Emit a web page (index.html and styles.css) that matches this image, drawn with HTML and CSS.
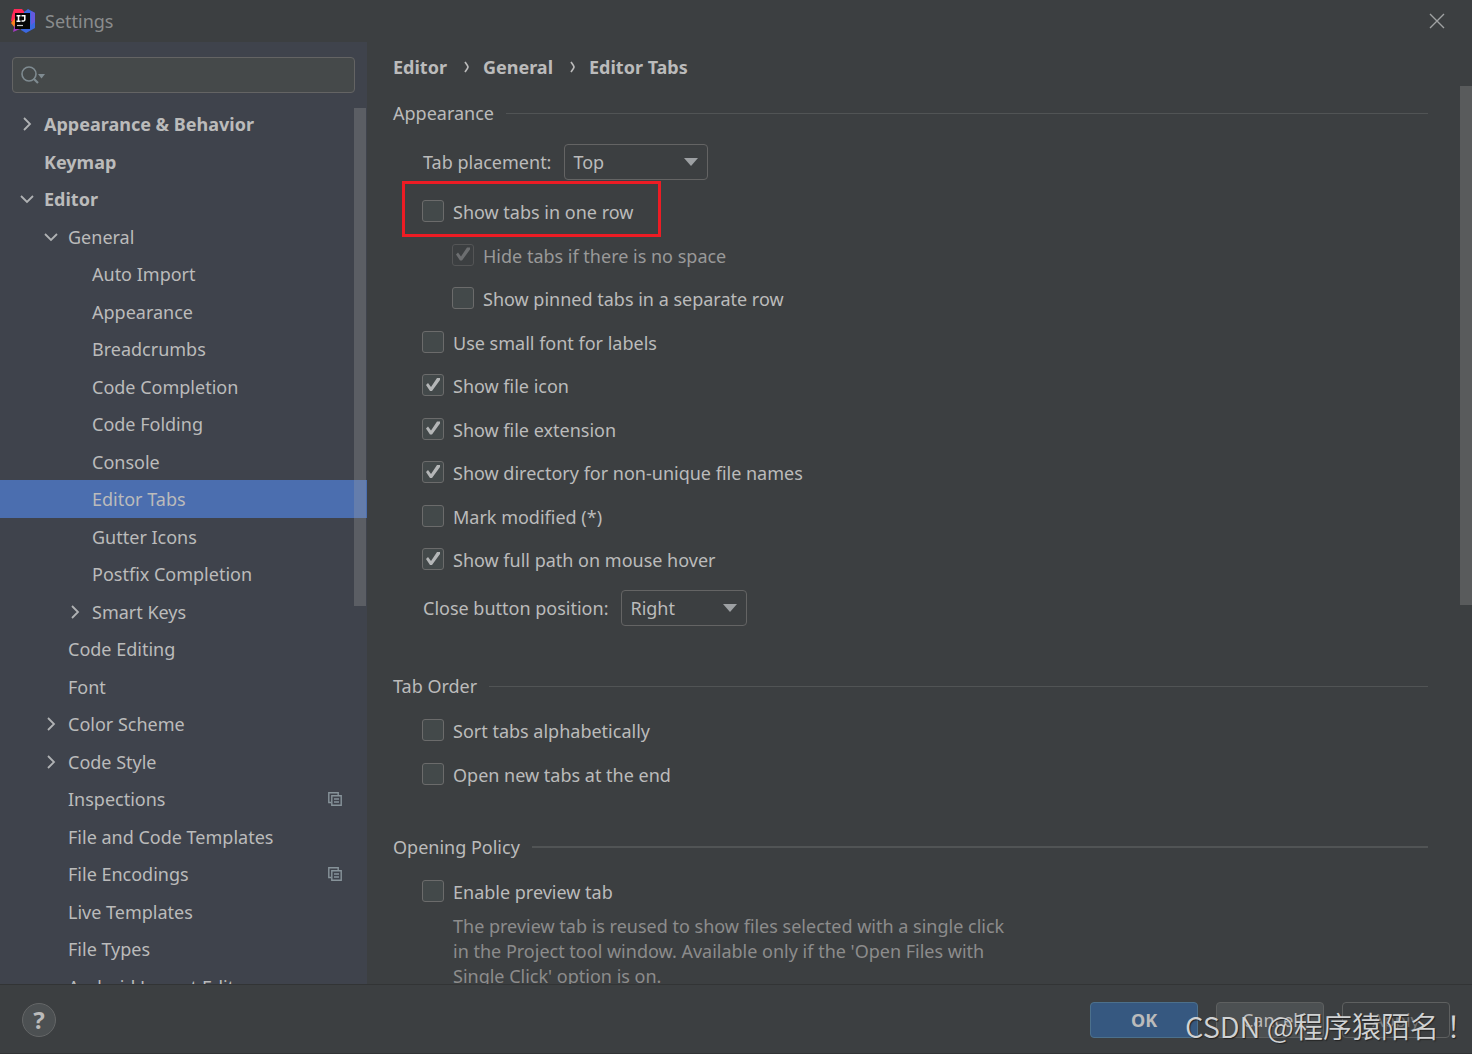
FILE: index.html
```html
<!DOCTYPE html>
<html lang="en">
<head>
<meta charset="utf-8">
<title>Settings</title>
<link rel="stylesheet" href="styles.css">
</head>
<body>
<svg class="defs" aria-hidden="true">
  <symbol id="chev-right" viewBox="0 0 14 14"><path d="M4 1l6 6-6 6" fill="none" stroke="currentColor" stroke-width="1.8"/></symbol>
  <symbol id="chev-down" viewBox="0 0 14 14"><path d="M1 4l6 6 6-6" fill="none" stroke="currentColor" stroke-width="1.8"/></symbol>
  <symbol id="arrow" viewBox="0 0 14 8"><path d="M0 0h14L7 8z" fill="currentColor"/></symbol>
  <symbol id="crumb" viewBox="0 0 6 12"><path d="M1 1q3 4 3 5t-3 5" fill="none" stroke="currentColor" stroke-width="1.7"/></symbol>
  <symbol id="copy" viewBox="0 0 14 14"><path d="M3 10.5H.8V.8h9.4V3" fill="none" stroke="currentColor" stroke-width="1.4"/><path d="M3.8 3.8h9.4v9.4H3.8zM6 7h5M6 10h5" fill="none" stroke="currentColor" stroke-width="1.4"/></symbol>
</svg>

<header class="titlebar">
  <svg class="logo" viewBox="0 0 24 24" aria-hidden="true">
    <path d="M3 0h8l4 5-8 12-7-5 1-6z" fill="#fe2857"/>
    <path d="M0 14l5-6 3 8-4 3z" fill="#fc801d"/>
    <path d="M2 23l2-8h9l2 6-6-1z" fill="#a23bc0"/>
    <path d="M13 3l4-3 7 4v15l-9 5-5-3z" fill="#3b68e0"/>
    <path d="M20 2l4 2v9l-4 3z" fill="#6459dd"/>
    <path d="M4 4h15v16H4z" fill="#060606"/>
    <path d="M5.500 6.700h4M7.500 6.700v5.600M5.500 12.300h4M10.500 6.700h3.300v4q0 1.600-3.300 1.400" fill="none" stroke="#fff" stroke-width="1.500"/>
    <path d="M6 16.500h6" stroke="#ccc" stroke-width="1.200"/>
  </svg>
  <h1 class="title">Settings</h1>
  <button class="close" type="button" aria-label="Close">
    <svg viewBox="0 0 16 16"><path d="M1 1l14 14M15 1L1 15" stroke="currentColor" stroke-width="1.400"/></svg>
  </button>
</header>

<div class="body">
  <nav class="sidebar" aria-label="Settings categories">
    <div class="search">
      <svg viewBox="0 0 26 20" aria-hidden="true"><circle cx="8" cy="9" r="7" fill="none" stroke="currentColor" stroke-width="1.600"/><path d="M12.500 13.500l4.500 4.500" stroke="currentColor" stroke-width="2.200"/><path d="M17 9h7l-3.500 4.500z" fill="currentColor"/></svg>
      <input type="text" aria-label="Search settings">
    </div>
    <div class="tree-pane">
      <ul class="tree">
        <li class="top"><svg class="chev"><use href="#chev-right"/></svg><a href="#">Appearance &amp; Behavior</a></li>
        <li class="top"><a href="#">Keymap</a></li>
        <li class="top"><svg class="chev"><use href="#chev-down"/></svg><a href="#">Editor</a></li>
        <li class="l1"><svg class="chev"><use href="#chev-down"/></svg><a href="#">General</a></li>
        <li class="l2"><a href="#">Auto Import</a></li>
        <li class="l2"><a href="#">Appearance</a></li>
        <li class="l2"><a href="#">Breadcrumbs</a></li>
        <li class="l2"><a href="#">Code Completion</a></li>
        <li class="l2"><a href="#">Code Folding</a></li>
        <li class="l2"><a href="#">Console</a></li>
        <li class="l2 selected"><a href="#" aria-current="page">Editor Tabs</a></li>
        <li class="l2"><a href="#">Gutter Icons</a></li>
        <li class="l2"><a href="#">Postfix Completion</a></li>
        <li class="l2"><svg class="chev"><use href="#chev-right"/></svg><a href="#">Smart Keys</a></li>
        <li class="l1"><a href="#">Code Editing</a></li>
        <li class="l1"><a href="#">Font</a></li>
        <li class="l1"><svg class="chev"><use href="#chev-right"/></svg><a href="#">Color Scheme</a></li>
        <li class="l1"><svg class="chev"><use href="#chev-right"/></svg><a href="#">Code Style</a></li>
        <li class="l1"><a href="#">Inspections</a><svg class="copy"><use href="#copy"/></svg></li>
        <li class="l1"><a href="#">File and Code Templates</a></li>
        <li class="l1"><a href="#">File Encodings</a><svg class="copy"><use href="#copy"/></svg></li>
        <li class="l1"><a href="#">Live Templates</a></li>
        <li class="l1"><a href="#">File Types</a></li>
        <li class="l1"><a href="#">Android Layout Editor</a></li>
      </ul>
      <div class="scrollbar tree-bar"></div>
    </div>
  </nav>

  <main class="content">
    <div class="crumbs">
      <span>Editor</span><svg><use href="#crumb"/></svg><span>General</span><svg><use href="#crumb"/></svg><span>Editor Tabs</span>
    </div>

    <section>
      <h2>Appearance</h2>
      <div class="field">
        <label for="placement">Tab placement:</label>
        <div class="combo wide">
          <select id="placement"><option>Top</option></select>
          <svg><use href="#arrow"/></svg>
        </div>
      </div>
      <div class="checks">
        <div class="check"><input type="checkbox" id="c1"><label for="c1">Show tabs in one row</label><div class="highlight"></div></div>
        <div class="check nested disabled"><input type="checkbox" id="c2" checked disabled><label for="c2">Hide tabs if there is no space</label></div>
        <div class="check nested"><input type="checkbox" id="c3"><label for="c3">Show pinned tabs in a separate row</label></div>
        <div class="check"><input type="checkbox" id="c4"><label for="c4">Use small font for labels</label></div>
        <div class="check"><input type="checkbox" id="c5" checked><label for="c5">Show file icon</label></div>
        <div class="check"><input type="checkbox" id="c6" checked><label for="c6">Show file extension</label></div>
        <div class="check"><input type="checkbox" id="c7" checked><label for="c7">Show directory for non-unique file names</label></div>
        <div class="check"><input type="checkbox" id="c8"><label for="c8">Mark modified (*)</label></div>
        <div class="check"><input type="checkbox" id="c9" checked><label for="c9">Show full path on mouse hover</label></div>
      </div>
      <div class="field">
        <label for="closepos">Close button position:</label>
        <div class="combo">
          <select id="closepos"><option>Right</option></select>
          <svg><use href="#arrow"/></svg>
        </div>
      </div>
    </section>

    <section>
      <h2>Tab Order</h2>
      <div class="checks">
        <div class="check"><input type="checkbox" id="c10"><label for="c10">Sort tabs alphabetically</label></div>
        <div class="check"><input type="checkbox" id="c11"><label for="c11">Open new tabs at the end</label></div>
      </div>
    </section>

    <section>
      <h2 class="strong">Opening Policy</h2>
      <div class="checks">
        <div class="check"><input type="checkbox" id="c12"><label for="c12">Enable preview tab</label></div>
      </div>
      <p class="hint">The preview tab is reused to show files selected with a single click in the Project tool window. Available only if the 'Open Files with Single Click' option is on.</p>
    </section>
    <div class="scrollbar page-bar"></div>
  </main>
</div>

<footer class="footer">
  <button class="help" type="button" aria-label="Help">?</button>
  <button class="btn primary" type="button">OK</button>
  <button class="btn" type="button">Cancel</button>
  <button class="btn apply" type="button" disabled>Apply</button>
  <div class="watermark">CSDN @程序猿陌名<span>！</span></div>
</footer>
</body>
</html>
```
FILE: styles.css
```css
* { box-sizing: border-box; }

body {
  margin: 0;
  height: 100vh;
  display: flex;
  flex-direction: column;
  overflow: hidden;
  background: #3c3f41;
  color: #bbbbbb;
  font: 18px/24px "Noto Sans", "Noto Sans CJK SC", sans-serif;
}

button, input, select { font: inherit; color: inherit; margin: 0; }
a { color: inherit; text-decoration: none; }
.defs { position: absolute; width: 0; height: 0; }

/* Title bar */
.titlebar {
  flex: none;
  height: 42px;
  display: flex;
  align-items: center;
  gap: 10px;
  padding: 0 27px 0 11px;
}
.logo { width: 24px; height: 24px; }
.title { margin: 0; flex: 1; font-size: 18px; font-weight: 400; color: #8a8c8d; }
.close { display: flex; padding: 0; border: 0; background: none; color: #a0a2a3; }
.close svg { width: 16px; height: 16px; }

.body { flex: 1; min-height: 0; display: flex; }

/* Category tree */
.sidebar {
  flex: none;
  width: 367px;
  display: flex;
  flex-direction: column;
  background: #3f434c;
}
.search {
  flex: none;
  height: 36px;
  margin: 15px 12px 12px;
  padding-left: 8px;
  display: flex;
  align-items: center;
  border: 1px solid #646464;
  border-radius: 4px;
  background: #45494a;
  color: #7f8b91;
}
.search svg { width: 26px; height: 20px; }
.search input { flex: 1; min-width: 0; border: 0; outline: 0; background: none; }

.tree-pane { position: relative; flex: 1; min-height: 0; overflow: hidden; }
.tree { list-style: none; margin: 0; padding: 0; }
.tree li {
  height: 38px;
  display: flex;
  align-items: center;
  padding-right: 25px;
}
.tree li:nth-child(even) { height: 37px; }
.tree .top { padding-left: 44px; font-weight: 700; }
.tree .l1 { padding-left: 68px; }
.tree .l2 { padding-left: 92px; }
.tree .selected { background: #4b6eaf; }
.tree a { flex: 1; }
.chev { width: 14px; height: 14px; margin-left: -24px; margin-right: 10px; color: #b0b2b4; }
.copy { width: 14px; height: 14px; color: #87939a; }

.scrollbar { position: absolute; background: rgba(166, 166, 166, 0.28); }
.tree-bar { top: 3px; right: 1px; width: 12px; height: 498px; }
.page-bar { top: 44px; right: 0; width: 12px; height: 519px; }

/* Settings page */
.content {
  position: relative;
  flex: 1;
  min-width: 0;
  overflow: hidden;
  padding: 13px 44px 0 26px;
}
.crumbs { display: flex; align-items: center; font-weight: 700; }
.crumbs svg { width: 6px; height: 12px; margin: 0 13px 0 17px; }

section { margin-bottom: 39px; }
h2 {
  display: flex;
  align-items: center;
  gap: 12px;
  margin: 0;
  font-size: 18px;
  font-weight: 400;
}
h2::after { content: ""; flex: 1; height: 1px; background: #515455; }
h2.strong::after { height: 2px; }
.crumbs + section { margin-top: 22px; padding-bottom: 9px; }

.field { display: flex; align-items: center; gap: 13px; padding-left: 30px; }
h2 + .field { margin: 19px 0 10px; }
.checks + .field { margin-top: 8px; }
.combo { display: grid; align-items: center; width: 126px; }
.combo.wide { width: 144px; }
.combo select {
  grid-area: 1 / 1;
  height: 36px;
  padding: 0 8px;
  appearance: none;
  border: 1px solid #646464;
  border-radius: 4px;
  background: #3c3f41;
}
.combo svg {
  grid-area: 1 / 1;
  justify-self: end;
  width: 14px;
  height: 8px;
  margin-right: 10px;
  color: #9da0a3;
  pointer-events: none;
}

.check {
  position: relative;
  height: 43px;
  display: flex;
  align-items: center;
  gap: 9px;
  padding-left: 29px;
}
.check:nth-child(odd) { height: 44px; }
h2 + .checks { margin-top: 11px; }
.nested { padding-left: 59px; }
.check input {
  width: 22px;
  height: 22px;
  margin-bottom: 2px;
  appearance: none;
  border: 1px solid #6b6b6b;
  border-radius: 3px;
  background: #43494a;
}
.check input:checked::before {
  content: "";
  display: block;
  height: 20px;
  background: #b4b6b7;
  clip-path: polygon(3px 10px, 5px 8px, 8px 12px, 14px 3px, 17px 3px, 17px 5px, 9px 16px, 7px 16px);
}
.disabled { color: #999999; }
.disabled input { border-color: #545556; background: #3c3f41; }
.disabled input:checked::before { background: #6c6e70; }

/* Marker frame drawn over the option it points out */
.highlight {
  position: absolute;
  top: -9px;
  left: 9px;
  width: 259px;
  height: 56px;
  border: 3px solid #ed1c24;
}

.hint {
  margin: 0;
  padding-left: 60px;
  max-width: 630px;
  line-height: 25px;
  color: #8c8c8c;
}

/* Button bar */
.footer {
  position: relative;
  flex: none;
  height: 70px;
  display: flex;
  align-items: center;
  gap: 18px;
  padding: 2px 22px 0;
  border-top: 1px solid #323435;
  border-bottom: 1px solid #323435;
}
.help {
  width: 34px;
  height: 34px;
  padding: 0;
  margin-right: auto;
  border: 1px solid #646667;
  border-radius: 50%;
  background: #4c5052;
  font-size: 24px;
  font-weight: 700;
}
.btn {
  width: 108px;
  height: 36px;
  padding: 0;
  border: 1px solid #5e6060;
  border-radius: 4px;
  background: #4c5052;
}
.primary { border-color: #4c708c; background: #365880; font-weight: 700; }
.apply { background: none; color: #777777; }

.watermark {
  position: absolute;
  right: 4px;
  bottom: 7px;
  font: 350 29px/42px "Noto Sans CJK SC", sans-serif;
  color: #d0d2d3;
  text-shadow: 1px 1px 1px #222222;
  white-space: nowrap;
  pointer-events: none;
}
.watermark span { font-family: "Noto Sans CJK TC", sans-serif; }
```
